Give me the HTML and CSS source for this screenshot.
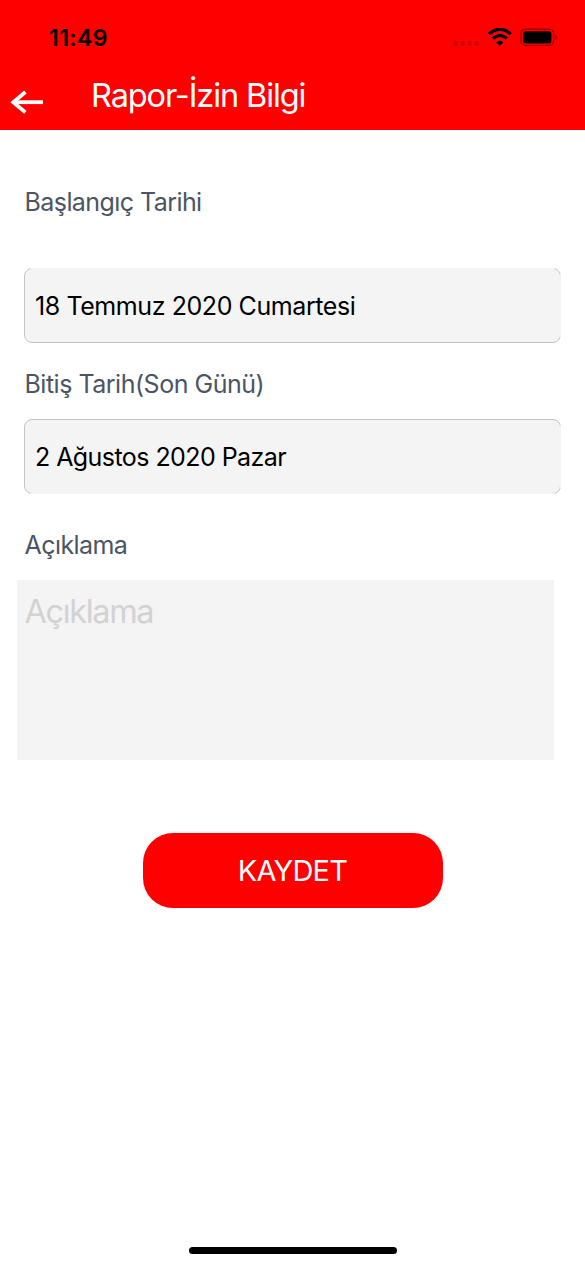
FILE: index.html
```
<!DOCTYPE html>
<html lang="tr">
<head>
<meta charset="utf-8">
<title>Rapor-İzin Bilgi</title>
<link rel="stylesheet" href="styles.css">
</head>
<body>
<div class="screen">
  <header class="header">
    <div class="status">
      <span class="time">11:49</span>
      <svg class="status-icons" width="108" height="22" viewBox="0 0 108 22">
        <g fill="#c90000">
          <rect x="3.5" y="13" width="4" height="5" rx="1.6"/><rect x="10.5" y="13" width="4" height="5" rx="1.6"/><rect x="17.5" y="13" width="4" height="5" rx="1.6"/><rect x="24.5" y="13" width="4" height="5" rx="1.6"/>
        </g>
        <g fill="none" stroke="#000" stroke-width="3.3">
          <path d="M38.9 6.1C45.5-.3 54.1-.3 60.7 6.1"/>
          <path d="M42.8 10.6C47.1 6.5 52.5 6.5 56.8 10.6"/>
        </g>
        <path d="M46.2 14.2C48.5 12.1 51.1 12.1 53.4 14.2L49.8 18Z"/>
        <rect x="70.9" y="1.2" width="32.8" height="16.2" rx="4.5" fill="none" stroke="#a50000" stroke-width="1.4"/>
        <rect x="73" y="3.2" width="28.4" height="12.2" rx="2.5"/>
        <path d="M105.4 6.4Q107.2 7.5 107.2 9.1T105.4 11.8Z" fill="#990000"/>
      </svg>
    </div>
    <div class="nav">
      <svg class="back" width="35" height="24" viewBox="0 0 35 24" fill="none" stroke="#fff">
        <path stroke-width="3.8" d="M34 12.2H5"/>
        <path stroke-width="3.8" d="M16.4 2L4.3 12.2L16.4 22.4"/>
      </svg>
      <h1 class="title">Rapor-İzin Bilgi</h1>
    </div>
  </header>
  <main class="form">
    <label class="label start-label">Başlangıç Tarihi</label>
    <div class="field start"><span class="start-text">18 Temmuz 2020 Cumartesi</span></div>
    <label class="label end-label">Bitiş Tarih(Son Günü)</label>
    <div class="field end"><span class="end-text">2 Ağustos 2020 Pazar</span></div>
    <label class="label note-label">Açıklama</label>
    <div class="note"><span class="placeholder">Açıklama</span></div>
    <button class="save"><span>KAYDET</span></button>
  </main>
  <div class="home"></div>
</div>
</body>
</html>
```
FILE: styles.css
```
* { box-sizing: border-box; }
body { margin: 0; background: #fff; font-family: Inter, sans-serif; }
.screen { width: 585px; height: 1266px; display: flex; flex-direction: column; overflow: hidden; }
.header { height: 130px; background: #f00; padding-top: 18px; }
.status { height: 57px; display: flex; justify-content: space-between; align-items: flex-start; padding: 0 27px 0 49px; }
.time { font-size: 23px; line-height: 40px; font-weight: 600; letter-spacing: .4px; color: #000; }
.status-icons { margin-top: 10px; }
.nav { display: flex; align-items: flex-start; padding-left: 9px; }
.back { margin-top: 15px; }
.title { margin: 1px 0 0 47px; font-size: 32.5px; line-height: 40px; font-weight: 400; letter-spacing: -1.1px; color: #fff; white-space: nowrap; }
.form { flex: 1; display: flex; flex-direction: column; align-items: flex-start; padding: 52px 24px 0; }
.label { font-size: 25px; line-height: 40px; letter-spacing: -.57px; color: #4b5563; white-space: nowrap; }
.end-label { letter-spacing: -.49px; }
.note-label { padding-top: 1px; margin-bottom: -1px; }
.field { position: relative; width: 537px; height: 75px; border: 1px solid #c4c4c4; border-radius: 8px; background: #f4f4f4; padding: 17px 0 0 10px; font-size: 25px; line-height: 40px; letter-spacing: -.42px; color: #000; white-space: nowrap; }
/* only the corners stay outlined on the borderless sides */
.field::before, .field::after { content: ""; position: absolute; background: #f4f4f4; }
.field::before { left: 5px; right: 5px; height: 1px; }
.field::after { top: 5px; bottom: 5px; right: -1px; width: 1px; }
.start::before { top: -1px; }
.end::before { bottom: -1px; }
.start { margin-top: 46px; }
.end-label { margin-top: 21px; }
.end { margin-top: 15px; padding-top: 17px; letter-spacing: -.56px; }
.note-label { margin-top: 30px; }
.note { width: 537px; height: 180px; margin: 16px 0 0 -7px; background: #f4f4f4; padding: 12px 0 0 7px; }
.placeholder { display: block; font-size: 32.5px; line-height: 40px; letter-spacing: -1.35px; color: #d2d2d2; font-weight: 400; }
.save { align-self: center; width: 300px; height: 75px; margin-top: 73px; border: 0; border-radius: 30px; background: #f00; color: #fff; font: 400 29px/40px Inter, sans-serif; letter-spacing: -.8px; }
.label { padding-left: .5px; }
.placeholder { padding-left: .5px; }
.home { align-self: center; width: 208px; height: 7px; margin-bottom: 12px; border-radius: 4px; background: #000; }
```
